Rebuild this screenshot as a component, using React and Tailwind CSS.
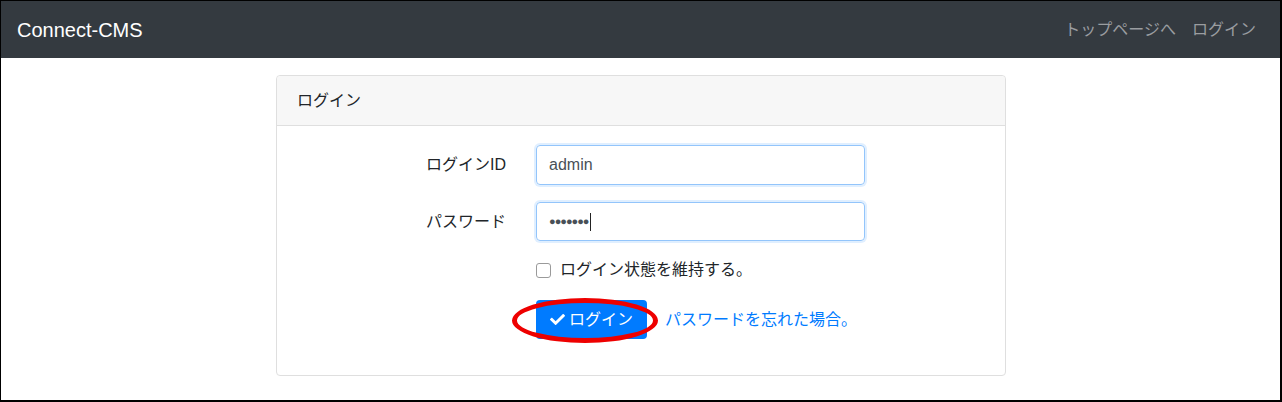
import React from "react";

const font = { fontFamily: '"Liberation Sans", "Noto Sans CJK JP", sans-serif' };

const CheckIcon = () => (
  <svg viewBox="0 0 512 512" className="w-[15px] h-[15px]" fill="currentColor">
    <path d="M173.898 439.404l-166.4-166.4c-9.997-9.997-9.997-26.206 0-36.204l36.203-36.204c9.997-9.998 26.207-9.998 36.204 0L192 312.69 432.095 72.596c9.997-9.997 26.207-9.997 36.204 0l36.203 36.204c9.997 9.997 9.997 26.206 0 36.204l-294.4 294.401c-9.998 9.997-26.207 9.997-36.204-.001z" />
  </svg>
);

const FieldRow = ({ label, children }) => (
  <div className="flex items-center mb-[17px]">
    <label className="w-[209px] text-right text-[16px] text-[#212529]">{label}</label>
    <div className="ml-[30px] w-[329px]">{children}</div>
  </div>
);

export default function App() {
  return (
    <div
      style={font}
      className="w-[1282px] h-[402px] border-l border-t border-r-2 border-b-2 border-black bg-white overflow-hidden"
    >
      {/* Navbar */}
      <nav className="h-[57px] bg-[#343a40] flex items-center justify-between pl-4 pr-4">
        <a className="text-[20px] text-white leading-[30px]">Connect-CMS</a>
        <div className="flex text-[16px] text-[#9a9da0]">
          <a className="px-2">トップページへ</a>
          <a className="px-2">ログイン</a>
        </div>
      </nav>

      {/* Card */}
      <div className="ml-[275px] mt-[17px] w-[730px] border border-[#dfdfdf] rounded-[4px]">
        <div className="h-[50px] bg-[#f7f7f7] border-b border-[#dfdfdf] flex items-center px-5 text-[16px] text-[#212529] rounded-t-[4px]">
          ログイン
        </div>
        <div className="px-5 pt-[19px] pb-[36px]">
          <FieldRow label="ログインID">
            <div className="h-[40px] border border-[#93c5fb] rounded-[4px] flex items-center px-3 text-[16px] text-[#495057] shadow-[0_0_0_2px_rgba(0,123,255,0.12)]">
              admin
            </div>
          </FieldRow>
          <FieldRow label="パスワード">
            <div className="h-[39px] border border-[#93c5fb] rounded-[4px] flex items-center px-3 text-[#495057] shadow-[0_0_0_2px_rgba(0,123,255,0.12)]">
              <span className="text-[11px] tracking-[-1px]">●●●●●●●</span>
              <span className="w-px h-[18px] bg-[#222] ml-[1px]"></span>
            </div>
          </FieldRow>

          <div className="ml-[239px] flex items-center h-[24px] mt-[4px]">
            <span className="w-[15px] h-[15px] border border-[#9a9a9a] rounded-[3px] bg-white"></span>
            <span className="ml-[9px] text-[16px] text-[#212529]">ログイン状態を維持する。</span>
          </div>

          <div className="ml-[239px] mt-[18px] flex items-center">
            <div className="relative">
              <button className="h-[39px] w-[111px] bg-[#007bff] text-white rounded-[4px] flex items-center justify-center gap-[4px] text-[16px]">
                <CheckIcon />
                <span>ログイン</span>
              </button>
              <span className="absolute left-[-24px] top-[-2px] w-[146px] h-[45px] rounded-[50%] border-[5px] border-[#ee0000] pointer-events-none"></span>
            </div>
            <a className="ml-[18px] text-[16px] text-[#007bff]">パスワードを忘れた場合。</a>
          </div>
        </div>
      </div>
    </div>
  );
}
